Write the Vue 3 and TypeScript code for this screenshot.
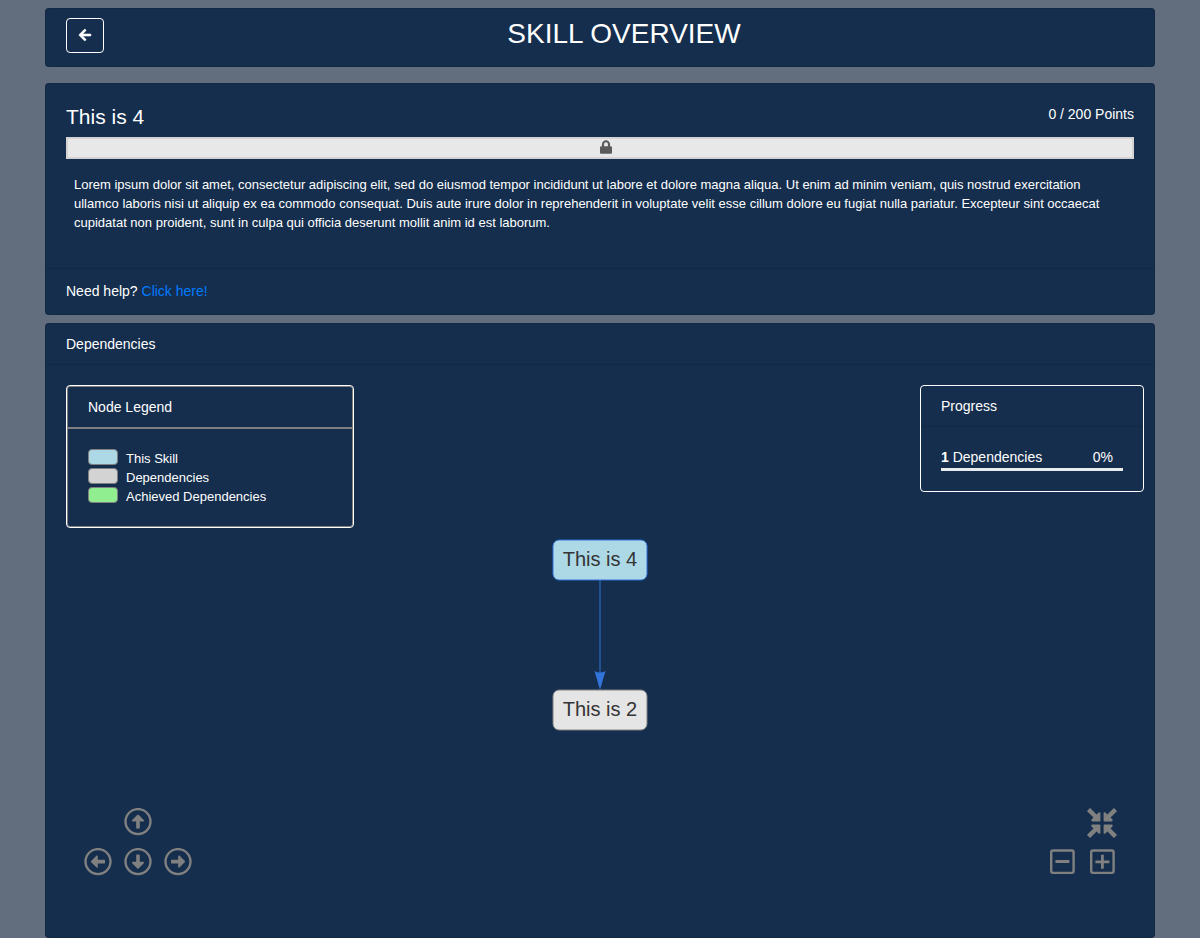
<script setup lang="ts">
interface LegendItem {
  label: string
  tone: string
}

interface GraphNode {
  label: string
  y: number
  tone: string
}

const description =
  'Lorem ipsum dolor sit amet, consectetur adipiscing elit, sed do eiusmod tempor incididunt ut labore et dolore magna aliqua. Ut enim ad minim veniam, quis nostrud exercitation ullamco laboris nisi ut aliquip ex ea commodo consequat. Duis aute irure dolor in reprehenderit in voluptate velit esse cillum dolore eu fugiat nulla pariatur. Excepteur sint occaecat cupidatat non proident, sunt in culpa qui officia deserunt mollit anim id est laborum.'

const legend: LegendItem[] = [
  { label: 'This Skill', tone: 'current' },
  { label: 'Dependencies', tone: 'pending' },
  { label: 'Achieved Dependencies', tone: 'achieved' },
]

const nodes: GraphNode[] = [
  { label: 'This is 4', y: 1, tone: 'current' },
  { label: 'This is 2', y: 151, tone: 'pending' },
]

const directions = [
  { name: 'up', angle: 0 },
  { name: 'left', angle: 270 },
  { name: 'down', angle: 180 },
  { name: 'right', angle: 90 },
]

const quadrants = [0, 90, 180, 270]
</script>

<template>
  <main class="page">
    <header class="card top-bar">
      <button class="back" type="button" aria-label="Back">
        <svg viewBox="0 0 448 512" width="12" height="14" aria-hidden="true">
          <path fill="currentColor" stroke="currentColor" stroke-width="20" d="M257.5 445.1l-22.2 22.2c-9.4 9.4-24.6 9.4-33.9 0L7 273c-9.4-9.4-9.4-24.6 0-33.9L201.4 44.7c9.4-9.4 24.6-9.4 33.9 0l22.2 22.2c9.5 9.5 9.3 25-.4 34.3L136.6 216H424c13.3 0 24 10.7 24 24v32c0 13.3-10.7 24-24 24H136.6l120.5 114.8c9.8 9.3 10 24.8.4 34.3z" />
        </svg>
      </button>
      <h1>SKILL OVERVIEW</h1>
    </header>

    <section class="card skill">
      <div class="skill-body">
        <div class="skill-head">
          <h2>This is 4</h2>
          <span>0 / 200 Points</span>
        </div>
        <div class="locked-bar">
          <svg viewBox="0 0 448 512" width="12" height="14" aria-hidden="true">
            <path fill="currentColor" d="M400 224h-24v-72C376 68.2 307.8 0 224 0S72 68.2 72 152v72H48c-26.5 0-48 21.5-48 48v192c0 26.5 21.5 48 48 48h352c26.5 0 48-21.5 48-48V272c0-26.5-21.5-48-48-48zm-104 0H152v-72c0-39.7 32.3-72 72-72s72 32.3 72 72v72z" />
          </svg>
        </div>
        <p>{{ description }}</p>
      </div>
      <footer>Need help? <a href="#help">Click here!</a></footer>
    </section>

    <section class="card dependencies">
      <h3 class="section-title">Dependencies</h3>
      <div class="stage">
        <div class="panels">
          <div class="legend">
            <h4>Node Legend</h4>
            <ul>
              <li v-for="item in legend" :key="item.label">
                <span class="swatch" :class="item.tone"></span>
                {{ item.label }}
              </li>
            </ul>
          </div>
          <div class="progress">
            <h4>Progress</h4>
            <div class="progress-body">
              <div class="progress-row">
                <span><b>1</b> Dependencies</span>
                <span>0%</span>
              </div>
              <div class="track"></div>
            </div>
          </div>
        </div>

        <svg class="graph" viewBox="0 0 96 192" width="96" height="192" role="img" aria-label="Dependency graph">
          <path class="edge" d="M48 41V136" />
          <path class="tip" d="M48 151L42.5 132Q48 135 53.5 132Z" />
          <g v-for="node in nodes" :key="node.label" class="node" :class="node.tone">
            <rect x="1" :y="node.y" width="94" height="40" rx="6" />
            <text x="48" :y="node.y + 26">{{ node.label }}</text>
          </g>
        </svg>

        <div class="controls">
          <div class="pan">
            <button v-for="d in directions" :key="d.name" type="button" :class="d.name" :aria-label="'Move ' + d.name">
              <svg viewBox="0 0 28 28" width="28" height="28" aria-hidden="true">
                <circle cx="14" cy="13.6" r="12.5" fill="none" stroke="currentColor" stroke-width="2.4" />
                <path :transform="`translate(0 -0.4) rotate(${d.angle} 14 14)`" fill="currentColor" d="M13.4 7.2Q14 6.7 14.6 7.2L20 12.6Q20.5 13.6 19.4 13.8H15.8V20.4Q15.8 21 15.2 21H12.8Q12.2 21 12.2 20.4V13.8H8.6Q7.5 13.6 8 12.6Z" />
              </svg>
            </button>
          </div>
          <div class="zoom">
            <button class="fit" type="button" aria-label="Zoom to fit">
              <svg viewBox="0 0 30 32" width="30" height="32" aria-hidden="true">
                <path v-for="q in quadrants" :key="q" :transform="`translate(0 2) rotate(${q} 15 15)`" fill="currentColor" d="M0.3 2.7L2.7 0.3Q3 0 3.4 0.3L9.6 6.5L11.6 4.5Q13.3 3.6 13.4 5.2V12.4Q13.4 13.4 12.4 13.4H5.2Q3.6 13.3 4.5 11.6L6.5 9.6L0.3 3.4Q0 3 0.3 2.7Z" />
              </svg>
            </button>
            <button type="button" aria-label="Zoom out">
              <svg viewBox="0 0 26 26" width="26" height="26" fill="none" stroke="currentColor" aria-hidden="true">
                <rect x="2.2" y="1.5" width="22.4" height="22.4" rx="1.8" stroke-width="2.4" />
                <path d="M6.4 12.5H20.4" stroke-width="3" />
              </svg>
            </button>
            <button type="button" aria-label="Zoom in">
              <svg viewBox="0 0 26 26" width="26" height="26" fill="none" stroke="currentColor" aria-hidden="true">
                <rect x="2.2" y="1.5" width="22.4" height="22.4" rx="1.8" stroke-width="2.4" />
                <path d="M6.4 12.8H20.4M13.4 5.8V19.8" stroke-width="2.8" />
              </svg>
            </button>
          </div>
        </div>
      </div>
    </section>
  </main>
</template>

<style>
body {
  margin: 0;
  background: #626d7d;
}
</style>

<style scoped>
* {
  box-sizing: border-box;
}

.page {
  max-width: 1110px;
  margin: 0 auto;
  padding-top: 8px;
  color: #fff;
  font: 14px/21px "Liberation Sans", Arial, sans-serif;
}

h1,
h2,
h3,
h4,
p,
ul {
  margin: 0;
  padding: 0;
  font-weight: 400;
}

button {
  display: flex;
  align-items: center;
  justify-content: center;
  padding: 0;
  border: 0;
  background: none;
  color: inherit;
  cursor: pointer;
}

.card {
  border: 1px solid rgba(0, 0, 0, 0.125);
  border-radius: 4px;
  background: #152e4d;
}

.top-bar {
  display: flex;
  align-items: flex-start;
  gap: 10px;
  margin-bottom: 16px;
  padding: 9px 20px 13px;
}

.back {
  width: 38px;
  height: 35px;
  padding-bottom: 1px;
  border: 1px solid #fff;
  border-radius: 4px;
}

.back svg {
  overflow: visible;
}

h1 {
  flex: 1;
  font-size: 28px;
  line-height: 32px;
  text-align: center;
}

.skill {
  margin-bottom: 8px;
}

.skill-body {
  padding: 20px 20px 36px;
}

.skill-head {
  display: flex;
  justify-content: space-between;
  margin-bottom: 8px;
}

h2 {
  font-size: 21px;
  line-height: 25px;
}

.locked-bar {
  display: flex;
  justify-content: center;
  height: 22px;
  padding: 1px 0 0 12px;
  border: 2px solid #d3d3d3;
  background: #e8e8e8;
  color: #5b5b5b;
}

p {
  margin: 16px 8px 0;
  font-size: 13px;
  line-height: 19px;
}

footer {
  padding: 12px 20px;
  border-top: 1px solid rgba(0, 0, 0, 0.125);
}

a {
  color: #007bff;
  text-decoration: none;
}

.section-title {
  padding: 10px 20px 9px;
  border-bottom: 1px solid rgba(0, 0, 0, 0.125);
  font-size: 14px;
}

.stage {
  display: flex;
  flex-direction: column;
  padding: 20px 10px 55px 20px;
}

.panels {
  display: flex;
  align-items: flex-start;
  justify-content: space-between;
}

.legend {
  width: 288px;
  border: 1px solid #fff;
  border-radius: 4px;
  box-shadow: inset 0 0 0 1px #808080;
}

h4 {
  padding: 10px 20px 9px;
  font-size: 14px;
}

.legend h4 {
  margin: 1px 1px 0;
  border-bottom: 2px solid #808080;
}

ul {
  padding: 20px 21px 21px;
  list-style: none;
  font-size: 13px;
  line-height: 19px;
}

li {
  display: flex;
  align-items: flex-start;
  gap: 8px;
}

.swatch {
  width: 30px;
  height: 16px;
  border: 1px solid #808080;
  border-radius: 4px;
}

.swatch.current {
  background: #add8e6;
}

.swatch.pending {
  background: #d3d3d3;
}

.swatch.achieved {
  background: #90ee90;
}

.progress {
  width: 224px;
  border: 1px solid #fff;
  border-radius: 4px;
}

.progress h4 {
  border-bottom: 1px solid rgba(0, 0, 0, 0.125);
}

.progress-body {
  padding: 20px;
}

.progress-row {
  display: flex;
  justify-content: space-between;
  padding-right: 10px;
}

.track {
  height: 3px;
  background: #e9ecef;
}

.graph {
  align-self: center;
  margin: 11px 10px 71px 0;
}

.edge {
  stroke: #2b7ce9;
  stroke-opacity: 0.45;
  stroke-width: 2;
}

.tip {
  fill: #3273dc;
}

.node rect {
  stroke-width: 1;
}

.node.current rect {
  fill: #add8e6;
  stroke: #3273dc;
}

.node.pending rect {
  fill: #e5e5e5;
  stroke: #808080;
}

.node text {
  fill: #343434;
  font-size: 20px;
  text-anchor: middle;
}

.controls {
  display: flex;
  justify-content: space-between;
  padding: 0 22px 0 12px;
  color: #808080;
}

.pan {
  display: grid;
  grid-template: 40px 40px / 40px 40px 40px;
}

.pan .up {
  grid-column: 2;
}

.pan .left {
  grid-column: 1;
}

.zoom {
  display: grid;
  grid-template: 40px 40px / 40px 40px;
}

.fit {
  grid-column: 2;
}
</style>
